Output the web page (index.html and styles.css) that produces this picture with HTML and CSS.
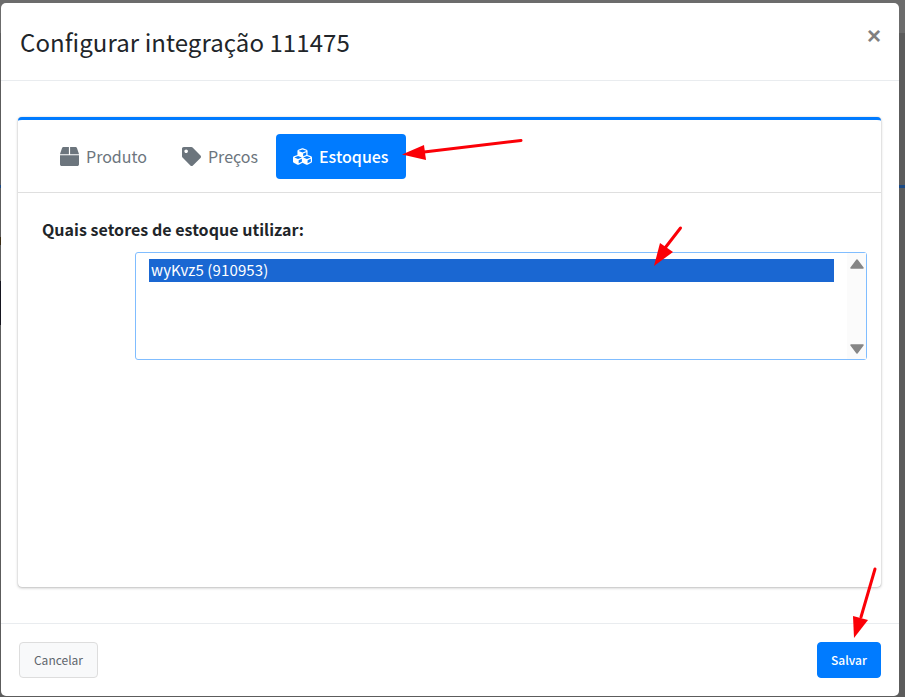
FILE: index.html
```html
<!DOCTYPE html>
<html lang="pt">
<head>
<meta charset="utf-8">
<title>Configurar integração</title>
<link rel="stylesheet" href="styles.css">
</head>
<body>
<div class="backdrop">
  <span class="bg-mark bg-mark-right"></span>
  <span class="bg-mark bg-mark-blue"></span>
  <span class="bg-mark bg-mark-brown"></span>
  <span class="bg-mark bg-mark-dark"></span>
  <div class="modal">
    <header class="modal-header">
      <h4 class="modal-title">Configurar integração 111475</h4>
      <span class="close">×</span>
    </header>
    <div class="modal-body">
      <section class="card">
        <nav class="tabs">
          <a class="tab">
            <svg class="icon icon-box" viewBox="0 0 512 512"><path d="M509.5 184.6 458.9 32.8C452.4 13.2 434.1 0 413.4 0H272v192h238.7c-.4-2.5-.4-5-1.2-7.4zM240 0H98.6c-20.7 0-39 13.2-45.5 32.8L2.5 184.6c-.8 2.4-.8 4.9-1.2 7.4H240V0zM0 224v240c0 26.5 21.5 48 48 48h416c26.5 0 48-21.5 48-48V224H0z"/></svg>
            <span>Produto</span>
          </a>
          <a class="tab">
            <svg class="icon icon-tag" viewBox="0 0 512 512"><path d="M0 252.118V48C0 21.49 21.49 0 48 0h204.118a48 48 0 0 1 33.941 14.059l211.882 211.882c18.745 18.745 18.745 49.137 0 67.882L293.823 497.941c-18.745 18.745-49.137 18.745-67.882 0L14.059 286.059A48 48 0 0 1 0 252.118zM112 64c-26.51 0-48 21.49-48 48s21.49 48 48 48 48-21.49 48-48-21.49-48-48-48z"/></svg>
            <span>Preços</span>
          </a>
          <a class="tab tab-active">
            <svg class="icon icon-cubes" viewBox="0 0 512 512"><path d="M488.6 250.2 392 214V105.5c0-15-9.3-28.4-23.4-33.7l-100-37.5c-8.1-3.1-17.1-3.1-25.3 0l-100 37.5c-14.1 5.3-23.4 18.7-23.4 33.7V214l-96.6 36.2C9.3 255.5 0 268.9 0 283.9V394c0 13.6 7.7 26.1 19.9 32.2l100 50c10.1 5.1 22.1 5.1 32.2 0l103.9-52 103.9 52c10.1 5.1 22.1 5.1 32.2 0l100-50c12.2-6.1 19.9-18.6 19.9-32.2V283.9c0-15-9.3-28.4-23.4-33.7zM358 214.8l-85 31.9v-68.2l85-37v73.3zM154 104.1l102-38.2 102 38.2v.6l-102 41.4-102-41.4v-.6zm84 291.1-85 42.5v-79.1l85-38.8v75.4zm0-112-102 41.4-102-41.4v-.6l102-38.2 102 38.2v.6zm240 112-85 42.5v-79.1l85-38.8v75.4zm0-112-102 41.4-102-41.4v-.6l102-38.2 102 38.2v.6z"/></svg>
            <span>Estoques</span>
          </a>
        </nav>
        <div class="card-body">
          <label class="field-label">Quais setores de estoque utilizar:</label>
          <div class="listbox">
            <div class="options">
              <div class="option">wyKvz5 (910953)</div>
            </div>
            <div class="scrollbar">
              <svg class="arrow" viewBox="0 0 14 10"><path d="M7 1 13 9H1Z"/></svg>
              <svg class="arrow" viewBox="0 0 14 10"><path d="M1 1H13L7 9Z"/></svg>
            </div>
          </div>
        </div>
      </section>
    </div>
    <footer class="modal-footer">
      <button class="btn btn-light">Cancelar</button>
      <button class="btn btn-primary">Salvar</button>
    </footer>
    <svg class="annotations" viewBox="0 0 905 697" width="905" height="697">
      <g class="arrow-mark">
        <path class="shaft" d="M521 140.500 424 152"/>
        <path d="M402 154.500 424 145 426 160Z"/>
        <path class="shaft" d="M680.500 228 665 248"/>
        <path d="M654 266 660 243 673 252Z"/>
        <path class="shaft" d="M875 569 861 617"/>
        <path d="M854 638 853 616 868 620Z"/>
      </g>
    </svg>
  </div>
</div>
</body>
</html>
```
FILE: styles.css
```css
* { box-sizing: border-box; }
html, body { margin: 0; height: 100%; }
body {
  font-family: "Noto Sans CJK SC", "Source Sans Pro", "Noto Sans", sans-serif;
  overflow: hidden;
}
.backdrop {
  position: relative;
  width: 905px;
  height: 697px;
  background: linear-gradient(#6c6c6c 33px, #5c5c5c 33px);
  padding: 3px 6px 1px 1px;
}
.bg-mark { position: absolute; display: block; }
.bg-mark-right { right: 0; top: 185px; width: 6px; height: 3px; background: #1b4a85; }
.bg-mark-blue { left: 0; top: 185px; width: 1px; height: 3px; background: #1b4a85; }
.bg-mark-brown { left: 0; top: 237px; width: 1px; height: 8px; background: #3a2c14; }
.bg-mark-dark { left: 0; top: 281px; width: 1px; height: 44px; background: #15151f; }
.modal {
  position: relative;
  height: 693px;
  width: 898px;
  background: #fff;
  border-radius: 5px;
  display: flex;
  flex-direction: column;
}
.modal-header {
  height: 78px;
  flex: none;
  border-bottom: 1px solid #e9ecef;
  display: flex;
  justify-content: space-between;
  padding: 0 18px 0 19px;
}
.modal-title {
  margin: 0;
  font-size: 24px;
  font-weight: 400;
  line-height: 78px;
  letter-spacing: 0.07px;
  color: #212529;
}
.close {
  font-family: "Liberation Sans", sans-serif;
  font-size: 24px;
  font-weight: 700;
  line-height: 66px;
  color: #808080;
}
.modal-body {
  flex: 1;
  padding: 36px 18px 36px 17px;
  min-height: 0;
}
.card {
  height: 100%;
  background: #fff;
  border-top: 3px solid #007bff;
  border-radius: 4px;
  box-shadow: 0 0 1px rgba(0,0,0,.25), 0 1px 3px rgba(0,0,0,.25);
  display: flex;
  flex-direction: column;
}
.tabs {
  flex: none;
  height: 73px;
  padding: 14px 0 0 25px;
  border-bottom: 1px solid #dfdfdf;
  display: flex;
  align-items: flex-start;
  gap: 1px;
}
.tab {
  height: 45px;
  padding: 0 17px;
  display: flex;
  align-items: center;
  gap: 7px;
  border-radius: 4px;
  color: #6c757d;
  font-size: 16px;
  line-height: 45px;
}
.tab-active { background: #007bff; color: #fff; font-weight: 500; }
.icon { width: 19px; height: 19px; fill: currentColor; flex: none; display: block; }
.card-body { flex: 1; padding: 22px 14px 0 24px; }
.field-label {
  display: block;
  font-size: 16px;
  font-weight: 700;
  line-height: 28px;
  letter-spacing: 0.03px;
  color: #212529;
}
.listbox {
  margin: 9px 0 0 93px;
  height: 108px;
  border: 1px solid #80bdff;
  border-radius: 3px;
  display: flex;
  background: #fff;
}
.options { flex: 1; padding: 6px 13px 0 13px; }
.option {
  height: 23px;
  background: #1a67d2;
  color: #fff;
  font-size: 15px;
  line-height: 22px;
  letter-spacing: 0.13px;
  padding-left: 2px;
}
.scrollbar {
  flex: none;
  width: 19px;
  background: #fbfbfb;
  padding: 6px 2px 5px 2px;
  display: flex;
  flex-direction: column;
  justify-content: space-between;
  align-items: center;
}
.arrow { width: 14px; height: 10px; fill: #868686; stroke: #868686; stroke-width: 1.500px; stroke-linejoin: round; display: block; }
.modal-footer {
  flex: none;
  height: 73px;
  border-top: 1px solid #e9ecef;
  padding: 18px 18px 0 18px;
  display: flex;
  justify-content: space-between;
  align-items: flex-start;
}
.btn {
  height: 36px;
  border-radius: 4px;
  font-family: inherit;
  font-size: 12px;
  line-height: 20px;
  padding: 0;
}
.btn-light { width: 79px; background: #f8f9fa; border: 1px solid #ddd; color: #5f666d; }
.btn-primary { width: 64px; background: #007bff; border: 1px solid #007bff; color: #fff; font-weight: 500; }
.annotations { position: absolute; left: -1px; top: -3px; pointer-events: none; }
.arrow-mark { fill: #fb0007; }
.shaft { fill: none; stroke: #fb0007; stroke-width: 3px; stroke-linecap: round; }
```
